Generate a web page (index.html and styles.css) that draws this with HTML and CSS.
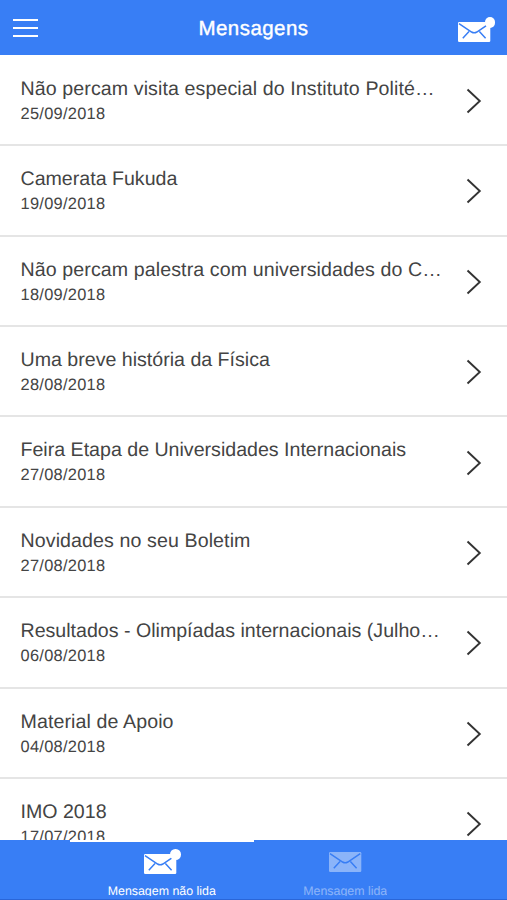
FILE: index.html
```html
<!DOCTYPE html>
<html lang="pt-BR">
<head>
<meta charset="utf-8">
<title>Mensagens</title>
<link rel="stylesheet" href="styles.css">
</head>
<body>
<svg class="defs" width="0" height="0" aria-hidden="true">
  <symbol id="envelope" viewBox="0 0 33 20">
    <rect x="0" y="0" width="32.3" height="20" rx="1.2" fill="#fff"/>
    <path d="M1 1.6 L13.6 10 Q16.2 11.5 18.8 10 L31.3 1.6 M11 9.6 L4.8 16.2 M21.4 9.6 L27.6 16.2" fill="none" stroke="#387ef5" stroke-width="1.5"/>
  </symbol>
  <symbol id="chevron" viewBox="0 0 16 26">
    <path d="M1.5 1.5 L13.8 13 L1.5 24.5" fill="none" stroke="#333" stroke-width="1.9"/>
  </symbol>
</svg>
<div class="app">
  <header class="bar">
    <button class="menu" aria-label="Menu"><i></i><i></i><i></i></button>
    <h1>Mensagens</h1>
    <span class="mail"><svg class="env"><use href="#envelope"/></svg><b class="dot"></b></span>
  </header>
  <main class="list">
    <article class="row"><div><h2 class="loose">Não percam visita especial do Instituto Polité…</h2><p>25/09/2018</p></div><svg class="chev"><use href="#chevron"/></svg></article>
    <article class="row"><div><h2>Camerata Fukuda</h2><p>19/09/2018</p></div><svg class="chev"><use href="#chevron"/></svg></article>
    <article class="row"><div><h2 class="loose">Não percam palestra com universidades do C…</h2><p>18/09/2018</p></div><svg class="chev"><use href="#chevron"/></svg></article>
    <article class="row"><div><h2>Uma breve história da Física</h2><p>28/08/2018</p></div><svg class="chev"><use href="#chevron"/></svg></article>
    <article class="row"><div><h2>Feira Etapa de Universidades Internacionais</h2><p>27/08/2018</p></div><svg class="chev"><use href="#chevron"/></svg></article>
    <article class="row"><div><h2 class="loose">Novidades no seu Boletim</h2><p>27/08/2018</p></div><svg class="chev"><use href="#chevron"/></svg></article>
    <article class="row"><div><h2>Resultados - Olimpíadas internacionais (Julho…</h2><p>06/08/2018</p></div><svg class="chev"><use href="#chevron"/></svg></article>
    <article class="row"><div><h2 class="loose">Material de Apoio</h2><p>04/08/2018</p></div><svg class="chev"><use href="#chevron"/></svg></article>
    <article class="row"><div><h2>IMO 2018</h2><p>17/07/2018</p></div><svg class="chev"><use href="#chevron"/></svg></article>
  </main>
  <nav class="tabs">
    <a class="tab active"><span class="mail"><svg class="env"><use href="#envelope"/></svg><b class="dot"></b></span><span class="label">Mensagem não lida</span></a>
    <a class="tab"><span class="mail"><svg class="env"><use href="#envelope"/></svg></span><span class="label">Mensagem lida</span></a>
  </nav>
</div>
</body>
</html>
```

FILE: styles.css
```css
* { box-sizing: border-box; }
body { margin: 0; font-family: "Liberation Sans", Arial, sans-serif; color: #444; background: #fff; text-rendering: geometricPrecision; }
h1, h2, p { margin: 0; font-weight: 400; }
.defs { position: absolute; }
.app { height: 900px; display: flex; flex-direction: column; overflow: hidden; }
.bar { flex: none; height: 54.5px; background: #387ef5; display: grid; grid-template-columns: 60px 1fr 60px; align-items: center; }
.menu { border: 0; background: none; padding: 0; margin: 1px 0 0 13px; width: 25px; height: 18px; display: flex; flex-direction: column; justify-content: space-between; }
.menu i { height: 2px; width: 25px; background: #fff; }
h1 { color: #fff; font-size: 20.5px; line-height: 24px; text-align: center; padding-top: 2.5px; letter-spacing: 0.45px; -webkit-text-stroke: 0.4px #fff; }
.mail { position: relative; display: block; width: 33px; height: 20px; }
.bar .mail { margin: 10px 0 0 11px; }
.env { display: block; width: 33px; height: 20px; }
.dot { position: absolute; width: 10.5px; height: 10.5px; left: 26.5px; top: -5px; border-radius: 50%; background: #fff; }
.list { flex: 1; min-height: 0; overflow: hidden; padding-top: 1.4px; }
.row { height: 90.4px; padding: 0 25px 0 20.5px; display: flex; justify-content: space-between; align-items: center; border-bottom: 2px solid #e5e5e5; }
.row div { min-width: 0; white-space: nowrap; padding-top: 1.6px; }
.row h2 { font-size: 19.6px; line-height: 26px; }
.row .loose { letter-spacing: 0.1px; }
.row p { font-size: 16.4px; line-height: 24px; letter-spacing: 0.28px; }
.chev { flex: none; width: 16px; height: 26px; margin-top: 2px; }
.tabs { flex: none; height: 60px; background: #387ef5; border-bottom: 1px solid #2a66d8; display: flex; padding: 0 70px; }
.tab { flex: 1; display: flex; flex-direction: column; align-items: center; padding-top: 12px; border-top: 2px solid transparent; color: #fff; }
.tab.active .mail { margin-left: -3px; }
.tab.active { border-top-color: #fff; }
.tab:not(.active) .mail, .tab:not(.active) .label { opacity: 0.42; }
.tab:not(.active) { padding-top: 10px; }
.tab:not(.active) .label { margin-top: 11px; }
.label { margin-top: 9px; height: 13px; overflow: hidden; font-size: 12.4px; line-height: 17px; white-space: nowrap; }
```
